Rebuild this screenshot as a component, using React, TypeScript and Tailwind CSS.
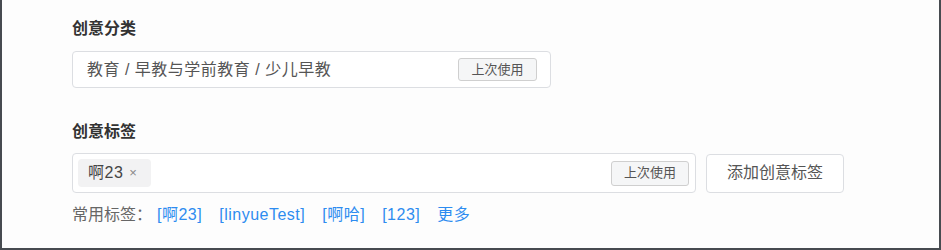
const font = { fontFamily: '"Liberation Sans", "Noto Sans CJK SC", sans-serif' }

function LastUsedButton({ className }: { className: string }) {
  return (
    <button
      className={`flex shrink-0 items-center justify-center rounded-[3px] border border-[#cfcfcf] bg-[#f5f6f7] text-[13px] text-[#555] ${className}`}
    >
      上次使用
    </button>
  )
}

const commonTags = ["[啊23]", "[linyueTest]", "[啊哈]", "[123]", "更多"]

export default function App() {
  return (
    <div className="h-[250px] w-[941px] bg-[#474b50] px-[2px] pb-[2px]" style={font}>
      <div className="h-[248px] w-full bg-[#fdfdfd] pl-[70px] pt-[17px]">
        {/* 创意分类 */}
        <div className="h-6 text-[16px] leading-6 font-semibold text-[#333]">创意分类</div>
        <div className="mt-[10px] flex h-[37px] w-[479px] items-center justify-between rounded-[4px] border border-[#dcdee2] bg-white pl-[14px] pr-[13px]">
          <span className="text-[16px] tracking-[0.5px] text-[#555]">教育 / 早教与学前教育 / 少儿早教</span>
          <LastUsedButton className="h-[23px] w-[79px]" />
        </div>

        {/* 创意标签 */}
        <div className="mt-[32px] h-6 text-[16px] leading-6 font-semibold text-[#333]">创意标签</div>
        <div className="mt-[9px] flex items-center gap-[10px]">
          <div className="flex h-[40px] w-[624px] items-center justify-between rounded-[4px] border border-[#dcdee2] bg-white pl-[5px] pr-[6px]">
            <span className="flex h-[28px] w-[73px] items-center gap-[6px] rounded-[4px] bg-[#f2f2f3] pl-[10px] text-[16px] tracking-[0.5px] text-[#444]">
              啊23
              <span className="text-[13px] text-[#888]">×</span>
            </span>
            <LastUsedButton className="h-[25px] w-[78px]" />
          </div>
          <button className="flex h-[39px] w-[138px] items-center justify-center rounded-[4px] border border-[#dcdee2] bg-white text-[16px] text-[#555]">
            添加创意标签
          </button>
        </div>

        {/* 常用标签 */}
        <div className="mt-[10px] flex h-6 items-center text-[16px] leading-6">
          <span className="text-[#666]">常用标签：</span>
          <div className="ml-[5px] flex gap-[17px] tracking-[0.5px]">
            {commonTags.map((tag) => (
              <a key={tag} className="cursor-pointer text-[#2d8cf0]">
                {tag}
              </a>
            ))}
          </div>
        </div>
      </div>
    </div>
  )
}
